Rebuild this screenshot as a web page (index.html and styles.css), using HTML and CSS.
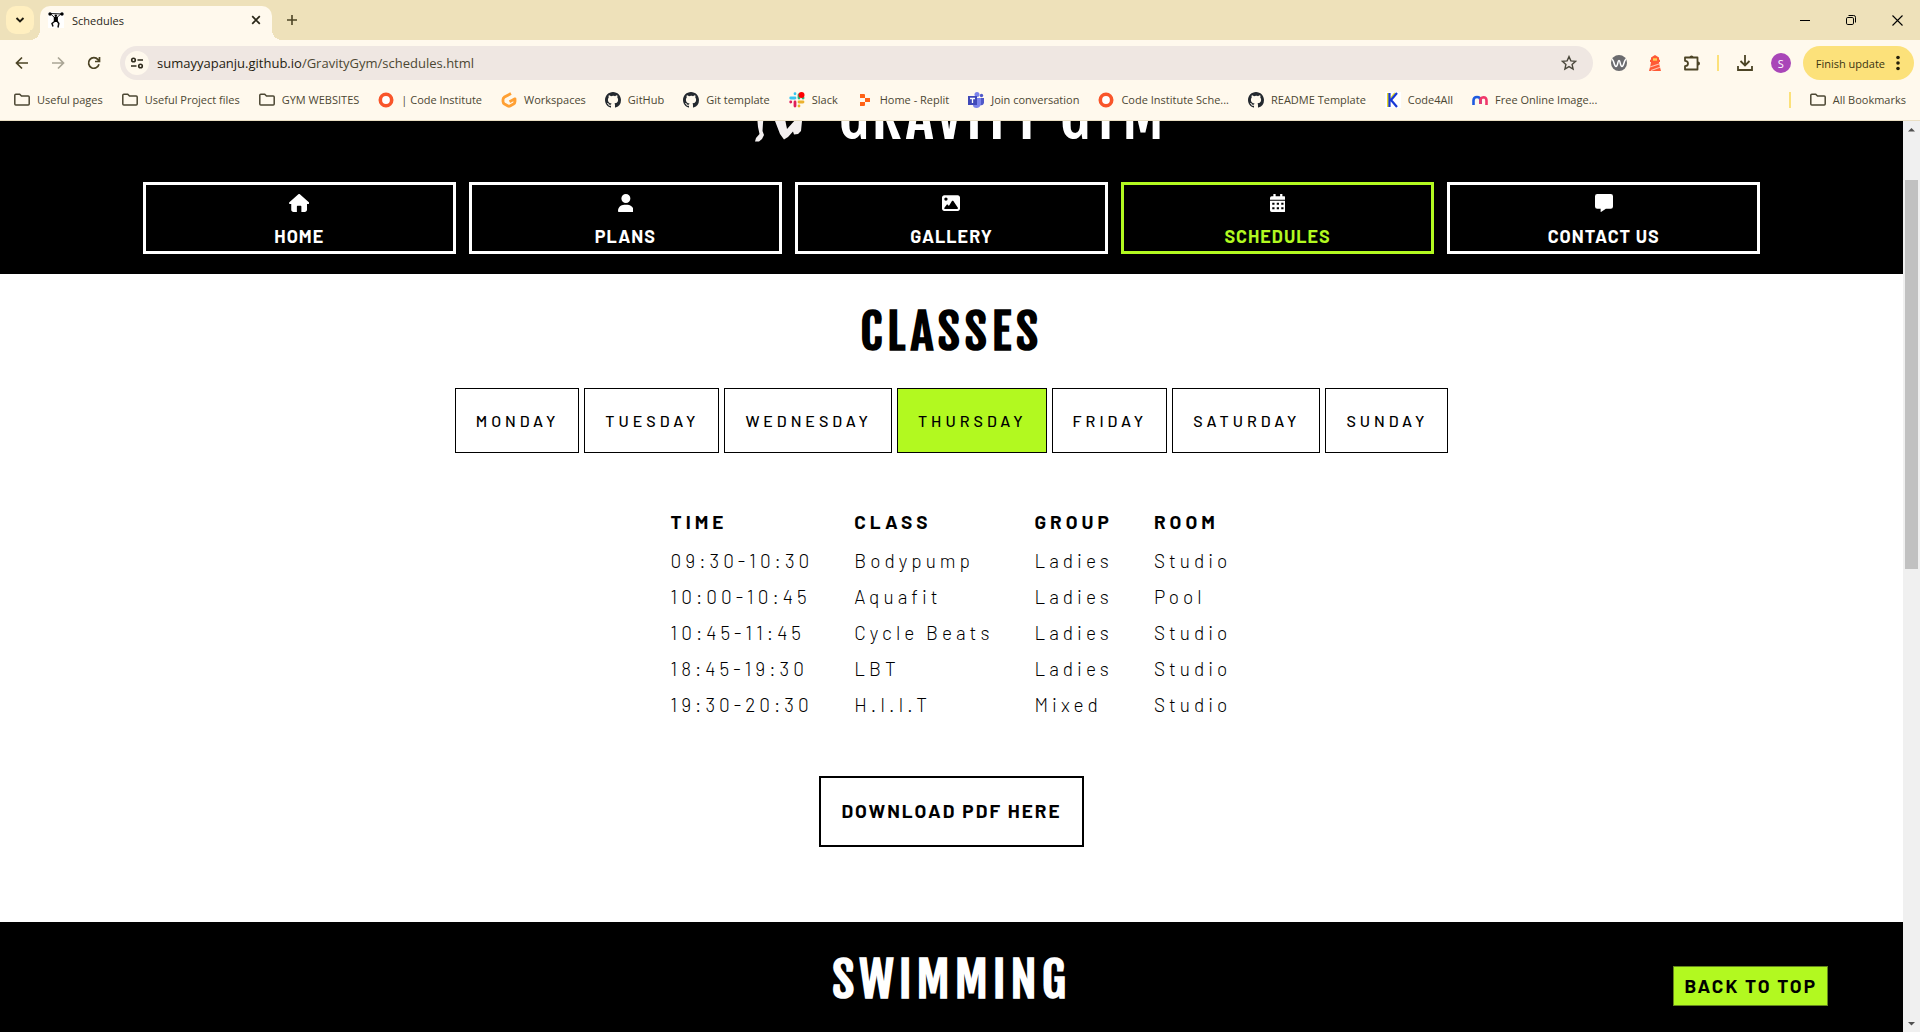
FILE: index.html
```html
<!DOCTYPE html>
<html lang="en">
<head>
<meta charset="utf-8">
<title>Schedules</title>
<link rel="stylesheet" href="styles.css">
</head>
<body>
<svg class="defs" width="0" height="0" aria-hidden="true">
  <symbol id="folder" viewBox="0 0 16 16"><path d="M.8 3.2q0-1 1-1h3.900l1.800 1.900h6.700q1 0 1 1v7q0 1-1 1H1.800q-1 0-1-1z" fill="none" stroke="#4c4733" stroke-width="1.500"/></symbol>
  <symbol id="github" viewBox="0 0 16 16"><path fill="#24292f" d="M8 0C3.580 0 0 3.580 0 8c0 3.540 2.290 6.530 5.470 7.590.4.070.55-.17.55-.38 0-.19-.01-.82-.01-1.490-2.010.37-2.530-.49-2.690-.94-.09-.23-.48-.94-.82-1.130-.28-.15-.68-.52-.01-.53.63-.01 1.080.58 1.230.82.72 1.210 1.870.87 2.330.66.070-.52.28-.87.51-1.070-1.780-.2-3.640-.89-3.640-3.950 0-.87.31-1.590.82-2.150-.08-.2-.36-1.020.08-2.120 0 0 .67-.21 2.200.82A7.600 7.600 0 0 1 8 3.870c.68 0 1.360.09 2 .27 1.530-1.040 2.200-.82 2.200-.82.44 1.100.16 1.920.08 2.120.51.56.82 1.270.82 2.150 0 3.070-1.870 3.750-3.650 3.950.29.25.54.73.54 1.480 0 1.070-.01 1.930-.01 2.200 0 .21.15.46.55.38A8.010 8.010 0 0 0 16 8c0-4.420-3.580-8-8-8z"/></symbol>
  <symbol id="ring" viewBox="0 0 16 16"><circle cx="8" cy="8" r="5.700" fill="#fff" stroke="#f9552a" stroke-width="3.600"/></symbol>
</svg>

<div class="tabstrip">
  <button class="tab-search" aria-label="Search tabs"><svg width="10" height="10" viewBox="0 0 10 10"><path d="M1.500 3l3.500 3.500L8.500 3" fill="none" stroke="#1f1c10" stroke-width="1.900"/></svg></button>
  <div class="tab">
    <svg class="favicon" width="16" height="16" viewBox="0 0 16 16"><path fill="#fff" d="M0 0h16v16H0z"/><path d="M1 1.500l14 .5M2.500 1.800l4 3.700M13 1.800L9 5.500" stroke="#111" fill="none"/><circle cx="2" cy="2" r="1.700"/><circle cx="14" cy="2" r="1.700"/><circle cx="7.800" cy="3.700" r="1.300"/><path d="M6.500 5v4.500l-2.500 2 1 3M9 5v4l1.800 2.500-.8 4" stroke="#111" stroke-width="1.500" fill="none"/><path d="M6 5h3.700v5H6z"/></svg>
    <span class="tab-title">Schedules</span>
    <button class="tab-close" aria-label="Close tab"><svg width="10" height="10" viewBox="0 0 10 10"><path d="M1.200 1.200l7.600 7.600m0-7.600L1.200 8.800" stroke="#2a2718" stroke-width="1.700"/></svg></button>
  </div>
  <button class="tab-new" aria-label="New tab"><svg width="12" height="12" viewBox="0 0 12 12"><path d="M6 1v10M1 6h10" stroke="#4c4425" stroke-width="1.600"/></svg></button>
  <div class="window-controls">
    <button aria-label="Minimise"><svg width="10" height="10" viewBox="0 0 10 10"><path d="M0 5.500h10" stroke="#000"/></svg></button>
    <button aria-label="Restore"><svg width="10" height="10" viewBox="0 0 10 10"><rect x=".5" y="2.500" width="7" height="7" rx="1.300" fill="none" stroke="#000"/><path d="M2.500.5h5.200q1.800 0 1.800 1.800v5.200" fill="none" stroke="#000"/></svg></button>
    <button aria-label="Close"><svg width="11" height="11" viewBox="0 0 11 11"><path d="M.5.5l10 10m0-10l-10 10" stroke="#000" stroke-width="1.100"/></svg></button>
  </div>
</div>

<div class="toolbar">
  <button class="tool" aria-label="Back"><svg width="16" height="16" viewBox="0 0 16 16"><path d="M14 8H3M8 2.500L2.500 8 8 13.500" fill="none" stroke="#4c4425" stroke-width="1.700"/></svg></button>
  <button class="tool" aria-label="Forward"><svg width="16" height="16" viewBox="0 0 16 16"><path d="M2 8h11M8 2.500L13.500 8 8 13.500" fill="none" stroke="#aaa595" stroke-width="1.700"/></svg></button>
  <button class="tool" aria-label="Reload"><svg width="16" height="16" viewBox="0 0 16 16"><path d="M13 9.300A5.300 5.300 0 1 1 12 4.600l1.500 1.600M13.500 2v4.500H9" fill="none" stroke="#4c4425" stroke-width="1.700"/></svg></button>
  <div class="omnibox">
    <span class="site-info"><svg width="14" height="14" viewBox="0 0 14 14"><g fill="none" stroke="#2f2b1d" stroke-width="1.600"><circle cx="3.500" cy="4" r="1.800"/><path d="M7.500 4H13M1 10h5.500"/><circle cx="10.500" cy="10" r="1.800"/></g></svg></span>
    <span class="url"><b>sumayyapanju.github.io</b>/GravityGym/schedules.html</span>
    <svg width="16" height="16" viewBox="0 0 16 16"><path d="M8 1.600l1.900 4.300 4.700.4-3.500 3.100 1 4.600L8 11.600 3.900 14l1-4.600L1.400 6.300l4.700-.4z" fill="none" stroke="#4b483c" stroke-width="1.400"/></svg>
  </div>
  <div class="extensions">
    <svg width="16" height="16" viewBox="0 0 16 16"><circle cx="8" cy="8" r="8" fill="#6b6b6e"/><path d="M1 4.500c2 0 2 7 4 7s1.500-6 3-6 1 6 3 6 2-7 4-7" fill="none" stroke="#fff" stroke-width="1.500"/></svg>
    <svg width="16" height="16" viewBox="0 0 16 16"><path fill="#ff5a36" d="M8 0l4 2.500v2.300h1V7h-1l.4 3L14 16H2l1.500-6L4 7H3V4.800h1V2.500z"/><path fill="#ffd34f" d="M6 3.300h4v2.400H6z"/><path d="M3 12l9-3M4 15.500l9-3.300" stroke="#ffc7b5" stroke-width="1.100"/></svg>
    <svg width="18" height="18" viewBox="0 0 18 18"><path d="M2 3.500h12.500v12H2v-3.300q3 0 3-2.700T2 6.800z" fill="none" stroke="#4c4425" stroke-width="1.800" stroke-linejoin="round"/><path fill="#4c4425" d="M6.500 3.500a2 2 0 0 1 4 0zM15 7.500a2 2 0 0 1 0 4z"/></svg>
  </div>
  <div class="actions">
    <span class="divider"></span>
    <svg width="16" height="16" viewBox="0 0 16 16"><path d="M8 0v10M3.500 6L8 10.500 12.500 6M1 11v4h14v-4" fill="none" stroke="#4c4425" stroke-width="1.800"/></svg>
    <span class="avatar">S</span>
  </div>
  <button class="update">Finish update<svg width="4" height="16" viewBox="0 0 4 16"><g fill="#241f0a"><circle cx="2" cy="2.500" r="1.800"/><circle cx="2" cy="8" r="1.800"/><circle cx="2" cy="13.500" r="1.800"/></g></svg></button>
</div>

<nav class="bookmarks" aria-label="Bookmarks">
  <a href="#"><svg><use href="#folder"/></svg>Useful pages</a>
  <a href="#"><svg><use href="#folder"/></svg>Useful Project files</a>
  <a href="#"><svg><use href="#folder"/></svg>GYM WEBSITES</a>
  <a href="#"><svg><use href="#ring"/></svg>| Code Institute</a>
  <a href="#"><svg viewBox="0 0 16 16"><path d="M10 1.500L3.500 5q-1.500 1-1.500 2.500v2q0 1.500 1.500 2.500L7 14q1 .5 2 0l3.500-2q1.500-1 1.500-2.500V6.800L8.500 9.700" fill="none" stroke="#ffa033" stroke-width="2.800" stroke-linejoin="round"/></svg>Workspaces</a>
  <a href="#"><svg><use href="#github"/></svg>GitHub</a>
  <a href="#"><svg><use href="#github"/></svg>Git template</a>
  <a href="#"><svg viewBox="0 0 16 16"><g stroke-width="2.800" stroke-linecap="round"><path stroke="#36c5f0" d="M6 1.700v.1M1.700 6H6"/><path stroke="#2eb67d" d="M10 3v3M14 6h.1"/><path stroke="#ecb22e" d="M10 10h4M10 14v.1"/><path stroke="#e01e5a" d="M6 10v4M1.700 10h.1"/></g><circle cx="12.500" cy="3" r="3" fill="#f00"/></svg>Slack</a>
  <a href="#"><svg viewBox="0 0 16 16"><path fill="#ff6216" d="M3 2h4q1 0 1 1v3H3zM8 6h5v4H8zM3 10h5v3q0 1-1 1H3z"/></svg>Home - Replit</a>
  <a href="#"><svg viewBox="0 0 16 16"><circle cx="9" cy="2.500" r="2.500" fill="#7b83eb"/><circle cx="13.500" cy="3.500" r="1.700" fill="#5059c9"/><path fill="#5059c9" d="M11 6h5v5q-1 3-4 2z"/><path fill="#7b83eb" d="M5 6h8v6q-1 4-4.500 4T5 13z"/><path fill="#3f48b8" d="M0 4h9v9H0z"/><path d="M2 6.500h5M4.500 6.500V11" stroke="#fff" stroke-width="1.300"/></svg>Join conversation</a>
  <a href="#"><svg><use href="#ring"/></svg>Code Institute Sche...</a>
  <a href="#"><svg><use href="#github"/></svg>README Template</a>
  <a href="#"><svg viewBox="0 0 16 16"><path fill="#fff" d="M0 0h16v16H0z"/><path d="M3 1v14M10 1L4.500 8" stroke="#e6d92a" stroke-width="2"/><path d="M4.500 1v14M12 1L6 8l6 7" fill="none" stroke="#1738d6" stroke-width="2.200"/></svg>Code4All</a>
  <a href="#"><svg viewBox="0 0 16 16"><path d="M1.500 13V8.500Q1.500 5 5 5t3.500 3.500V12" fill="none" stroke="#1e5be0" stroke-width="2.600"/><path d="M8.500 12V8.500q0-3 3-3.200 3 0 3 3.200V13" fill="none" stroke="#f0386b" stroke-width="2.600"/></svg>Free Online Image...</a>
  <span class="divider"></span>
  <a href="#"><svg><use href="#folder"/></svg>All Bookmarks</a>
</nav>

<div class="viewport">
  <div class="page">
    <header class="site-header">
      <div class="brand">
        <svg width="50" height="60" viewBox="0 0 50 60"><g fill="#f4f0f0"><path d="M2 20h9L9 38l-.5 8L10 50l-2 4-3 2.500H1L2 53l3.500-4L4 42z"/><path d="M16 22h30l2 14-1 10-3 3-4 .5-1-3L34 52l-4 2.500L26 49l-5-13z"/></g><path d="M31 34l2 10 9-10z" fill="#000"/></svg>
        <h1>GRAVITY GYM</h1>
      </div>
      <nav class="menu" aria-label="Main">
        <a href="#"><svg viewBox="0 0 576 512"><path d="M575.800 255.500c0 18-15 32.100-32 32.100h-32l.7 160.200c0 35-28 64.200-64 64.200H352V360c0-22-10-24-24-24h-80c-14 0-24 6-24 24v152H128c-36 0-64-28-64-64V287.600H32c-18 0-32-14-32-32.100 0-9 3-17 10-24L266.400 8c7-7 15-8 22-8s15 2 21 7l255.400 224.500c8 7 12 15 11 24z"/></svg>HOME</a>
        <a href="#"><svg viewBox="0 0 448 512"><path d="M224 256a128 128 0 1 0 0-256 128 128 0 1 0 0 256zm-45.700 48C79.800 304 0 383.800 0 482.300 0 498.700 13.300 512 29.700 512h388.600c16.400 0 29.700-13.300 29.700-29.700 0-98.500-79.800-178.300-178.300-178.300z"/></svg>PLANS</a>
        <a href="#"><svg viewBox="0 0 512 512"><path fill-rule="evenodd" d="M64 32C29 32 0 61 0 96v320c0 35 29 64 64 64h384c35 0 64-29 64-64V96c0-35-29-64-64-64zm48 64a48 48 0 1 1 0 96 48 48 0 0 1 0-96zm211 106l128 188c11 16 0 34-20 34H88c-22 0-30-20-19-36l64-80c9-11 25-11 35 0l28 32 87-138c10-14 30-14 40 0z"/></svg>GALLERY</a>
        <a href="#" class="current"><svg viewBox="0 0 448 512"><path fill-rule="evenodd" d="M96 0h64v64h128V0h64v64h48q48 0 48 48v48H0v-48q0-48 48-48h48zM0 192h448v272q0 48-48 48H48q-48 0-48-48zm64 56v56h64v-56zm128 0v56h64v-56zm128 0v56h64v-56zM64 376v56h64v-56zm128 0v56h64v-56zm128 0v56h64v-56z"/></svg>SCHEDULES</a>
        <a href="#"><svg viewBox="0 0 512 512"><path d="M64 0Q0 0 0 64v288q0 64 64 64h96v80q2 24 22 11l127-91h139q64 0 64-64V64q0-64-64-64z"/></svg>CONTACT US</a>
      </nav>
    </header>

    <main>
      <section class="classes">
        <h2>CLASSES</h2>
        <div class="days">
          <button>MONDAY</button>
          <button>TUESDAY</button>
          <button>WEDNESDAY</button>
          <button class="active">THURSDAY</button>
          <button>FRIDAY</button>
          <button>SATURDAY</button>
          <button>SUNDAY</button>
        </div>
        <table class="timetable">
          <thead><tr><th>TIME</th><th>CLASS</th><th>GROUP</th><th>ROOM</th></tr></thead>
          <tbody>
            <tr><td>09:30-10:30</td><td>Bodypump</td><td>Ladies</td><td>Studio</td></tr>
            <tr><td>10:00-10:45</td><td>Aquafit</td><td>Ladies</td><td>Pool</td></tr>
            <tr><td>10:45-11:45</td><td>Cycle Beats</td><td>Ladies</td><td>Studio</td></tr>
            <tr><td>18:45-19:30</td><td>LBT</td><td>Ladies</td><td>Studio</td></tr>
            <tr><td>19:30-20:30</td><td>H.I.I.T</td><td>Mixed</td><td>Studio</td></tr>
          </tbody>
        </table>
        <a class="download" href="#">DOWNLOAD PDF HERE</a>
      </section>
      <section class="swimming">
        <h2>SWIMMING</h2>
      </section>
    </main>
    <a class="to-top" href="#">BACK TO TOP</a>
  </div>
  <div class="scrollbar" aria-hidden="true">
    <svg width="17" height="17" viewBox="0 0 17 17"><path d="M5 10.500h7L8.500 7z" fill="#505050"/></svg>
    <span class="thumb"></span>
    <svg width="17" height="17" viewBox="0 0 17 17"><path d="M5 7h7l-3.500 3.500z" fill="#505050"/></svg>
  </div>
</div>
</body>
</html>
```

FILE: styles.css
```css
* { box-sizing: border-box; }

body {
  margin: 0;
  height: 100vh;
  display: flex;
  flex-direction: column;
  overflow: hidden;
  background: #fff9ed;
  font-family: "Open Sans", "Noto Sans", sans-serif;
  font-size: 11px;
  color: #4c4733;
}

button {
  font: inherit;
  color: inherit;
  background: none;
  border: 0;
  padding: 0;
}

a { color: inherit; text-decoration: none; }
svg { flex: none; display: block; }
.defs { position: absolute; }

/* Tab strip */
.tabstrip {
  flex: none;
  display: flex;
  height: 40px;
  background: #eee1ba;
}
.tab-search {
  width: 28px;
  height: 28px;
  margin: 6px 6px 0;
  border-radius: 10px;
  background: #ffefc0;
  display: grid;
  place-items: center;
}
.tab {
  position: relative;
  display: flex;
  align-items: center;
  gap: 8px;
  width: 232px;
  height: 34px;
  margin-top: 6px;
  padding: 0 11px 6px 8px;
  border-radius: 10px 10px 0 0;
  background: #fff9ed;
}
.tab::before,
.tab::after {
  content: "";
  position: absolute;
  bottom: 0;
  width: 10px;
  height: 10px;
}
.tab::before { left: -10px; background: radial-gradient(circle at 0 0, #eee1ba 10px, #fff9ed 10px); }
.tab::after { right: -10px; background: radial-gradient(circle at 100% 0, #eee1ba 10px, #fff9ed 10px); }
.tab-title { flex: 1; color: #2a2718; }
.tab-new { width: 40px; height: 40px; display: grid; place-items: center; }
.window-controls { margin-left: auto; display: flex; }
.window-controls button { width: 46px; display: grid; place-items: center; }

/* Toolbar */
.toolbar {
  flex: none;
  display: flex;
  align-items: center;
  height: 46px;
  padding: 0 6px 0 14px;
}
.tool { width: 36px; display: flex; }
.tool:nth-child(3) { width: 34px; }
.omnibox {
  flex: 1;
  display: flex;
  align-items: center;
  height: 34px;
  margin-right: 18px;
  padding: 0 16px 0 5px;
  border-radius: 17px;
  background: #efe7e2;
  font-size: 13px;
}
.site-info {
  width: 24px;
  height: 24px;
  border-radius: 12px;
  background: #fff9ed;
  display: grid;
  place-items: center;
  margin-right: 8px;
}
.url { flex: 1; }
.url b { font-weight: 400; color: #1f1c10; }
.extensions { display: flex; align-items: center; gap: 20px; margin-right: 16px; }
.actions { display: flex; align-items: center; gap: 18px; margin-right: 12px; }
.divider { width: 2px; height: 16px; background: #fce17a; }
.avatar {
  width: 20px;
  height: 20px;
  border-radius: 10px;
  background: #a946b8;
  color: #fff;
  display: grid;
  place-items: center;
}
.update {
  display: flex;
  align-items: center;
  gap: 11px;
  height: 34px;
  padding: 0 14px 0 13px;
  border-radius: 17px;
  background: #fce17a;
  color: #3a3310;
}

/* Bookmarks bar */
.bookmarks {
  flex: none;
  display: flex;
  align-items: center;
  gap: 19px;
  height: 35px;
  padding: 0 14px 7px;
  border-bottom: 1px solid #eadfc4;
  white-space: nowrap;
}
.bookmarks a { display: flex; align-items: center; gap: 7px; }
.bookmarks svg { width: 16px; height: 16px; }
.bookmarks .divider { margin-left: auto; }

/* Page area and its scrollbar */
.viewport { flex: 1; min-height: 0; display: flex; }
.page {
  flex: 1;
  display: flex;
  flex-direction: column;
  overflow: hidden;
  background: #fff;
  color: #000;
  font-family: Barlow, Roboto, "Liberation Sans", sans-serif;
  font-size: 19px;
}
.scrollbar {
  flex: none;
  width: 17px;
  display: flex;
  flex-direction: column;
  background: #f0f0f0;
}
.thumb { width: 13px; height: 389px; margin: 42px 2px auto; background: #c1c1c1; }

/* Site header */
.site-header { padding-bottom: 20px; background: #000; color: #fff; }
.brand {
  display: flex;
  justify-content: center;
  align-items: flex-end;
  gap: 34px;
  height: 24px;
  padding-left: 18px;
}
.brand h1 {
  margin: 0;
  font-family: "Fjalla One", "Roboto Condensed", Roboto, sans-serif;
  font-size: 60px;
  font-weight: 400;
  line-height: 58px;
  letter-spacing: 3px;
}
.menu {
  display: grid;
  grid-template-columns: repeat(5, 1fr);
  gap: 13px;
  width: 85%;
  margin: 37px auto 0;
}
.menu a {
  display: flex;
  flex-direction: column;
  align-items: center;
  gap: 12px;
  height: 72px;
  padding-top: 9px;
  border: 3px solid #fff;
  font-size: 18px;
  font-weight: 700;
  line-height: 24px;
  letter-spacing: 1px;
}
.menu svg { height: 18px; fill: #fff; }
.menu .current { border-color: #b2f920; color: #b2f920; }

/* Sections */
main { flex: 1; display: flex; flex-direction: column; }
h2 {
  margin: 0 0 26px;
  font-family: "Fjalla One", "Roboto Condensed", Roboto, sans-serif;
  font-size: 48px;
  line-height: 60px;
  letter-spacing: 5px;
}
.classes {
  display: flex;
  flex-direction: column;
  align-items: center;
  padding: 28px 0 75px;
}
.days { display: flex; gap: 5px; }
.days button {
  height: 65px;
  padding: 0 19px 0 20px;
  border: 1px solid #000;
  background: #fff;
  font-size: 16px;
  font-weight: 500;
  letter-spacing: 4px;
}
.days .active { background: #b2f920; }

.timetable {
  margin: 49px 0 54px;
  border-collapse: collapse;
  letter-spacing: 4px;
  text-align: left;
}
.timetable th { height: 40px; padding: 0 21px 2px 20px; font-weight: 700; }
.timetable td { height: 36px; padding: 0 21px 0 20px; font-weight: 300; }

.download {
  padding: 0 20px 2px;
  border: 2px solid #000;
  font-weight: 700;
  line-height: 65px;
  letter-spacing: 2px;
}
.swimming {
  flex: 1;
  padding-top: 28px;
  background: #000;
  color: #fff;
  text-align: center;
}

.to-top {
  position: fixed;
  right: 92px;
  bottom: 26px;
  padding: 0 10px;
  border: 1px solid #64861c;
  background: #b2f920;
  color: #000;
  font-weight: 700;
  line-height: 38px;
  letter-spacing: 2px;
}
```
